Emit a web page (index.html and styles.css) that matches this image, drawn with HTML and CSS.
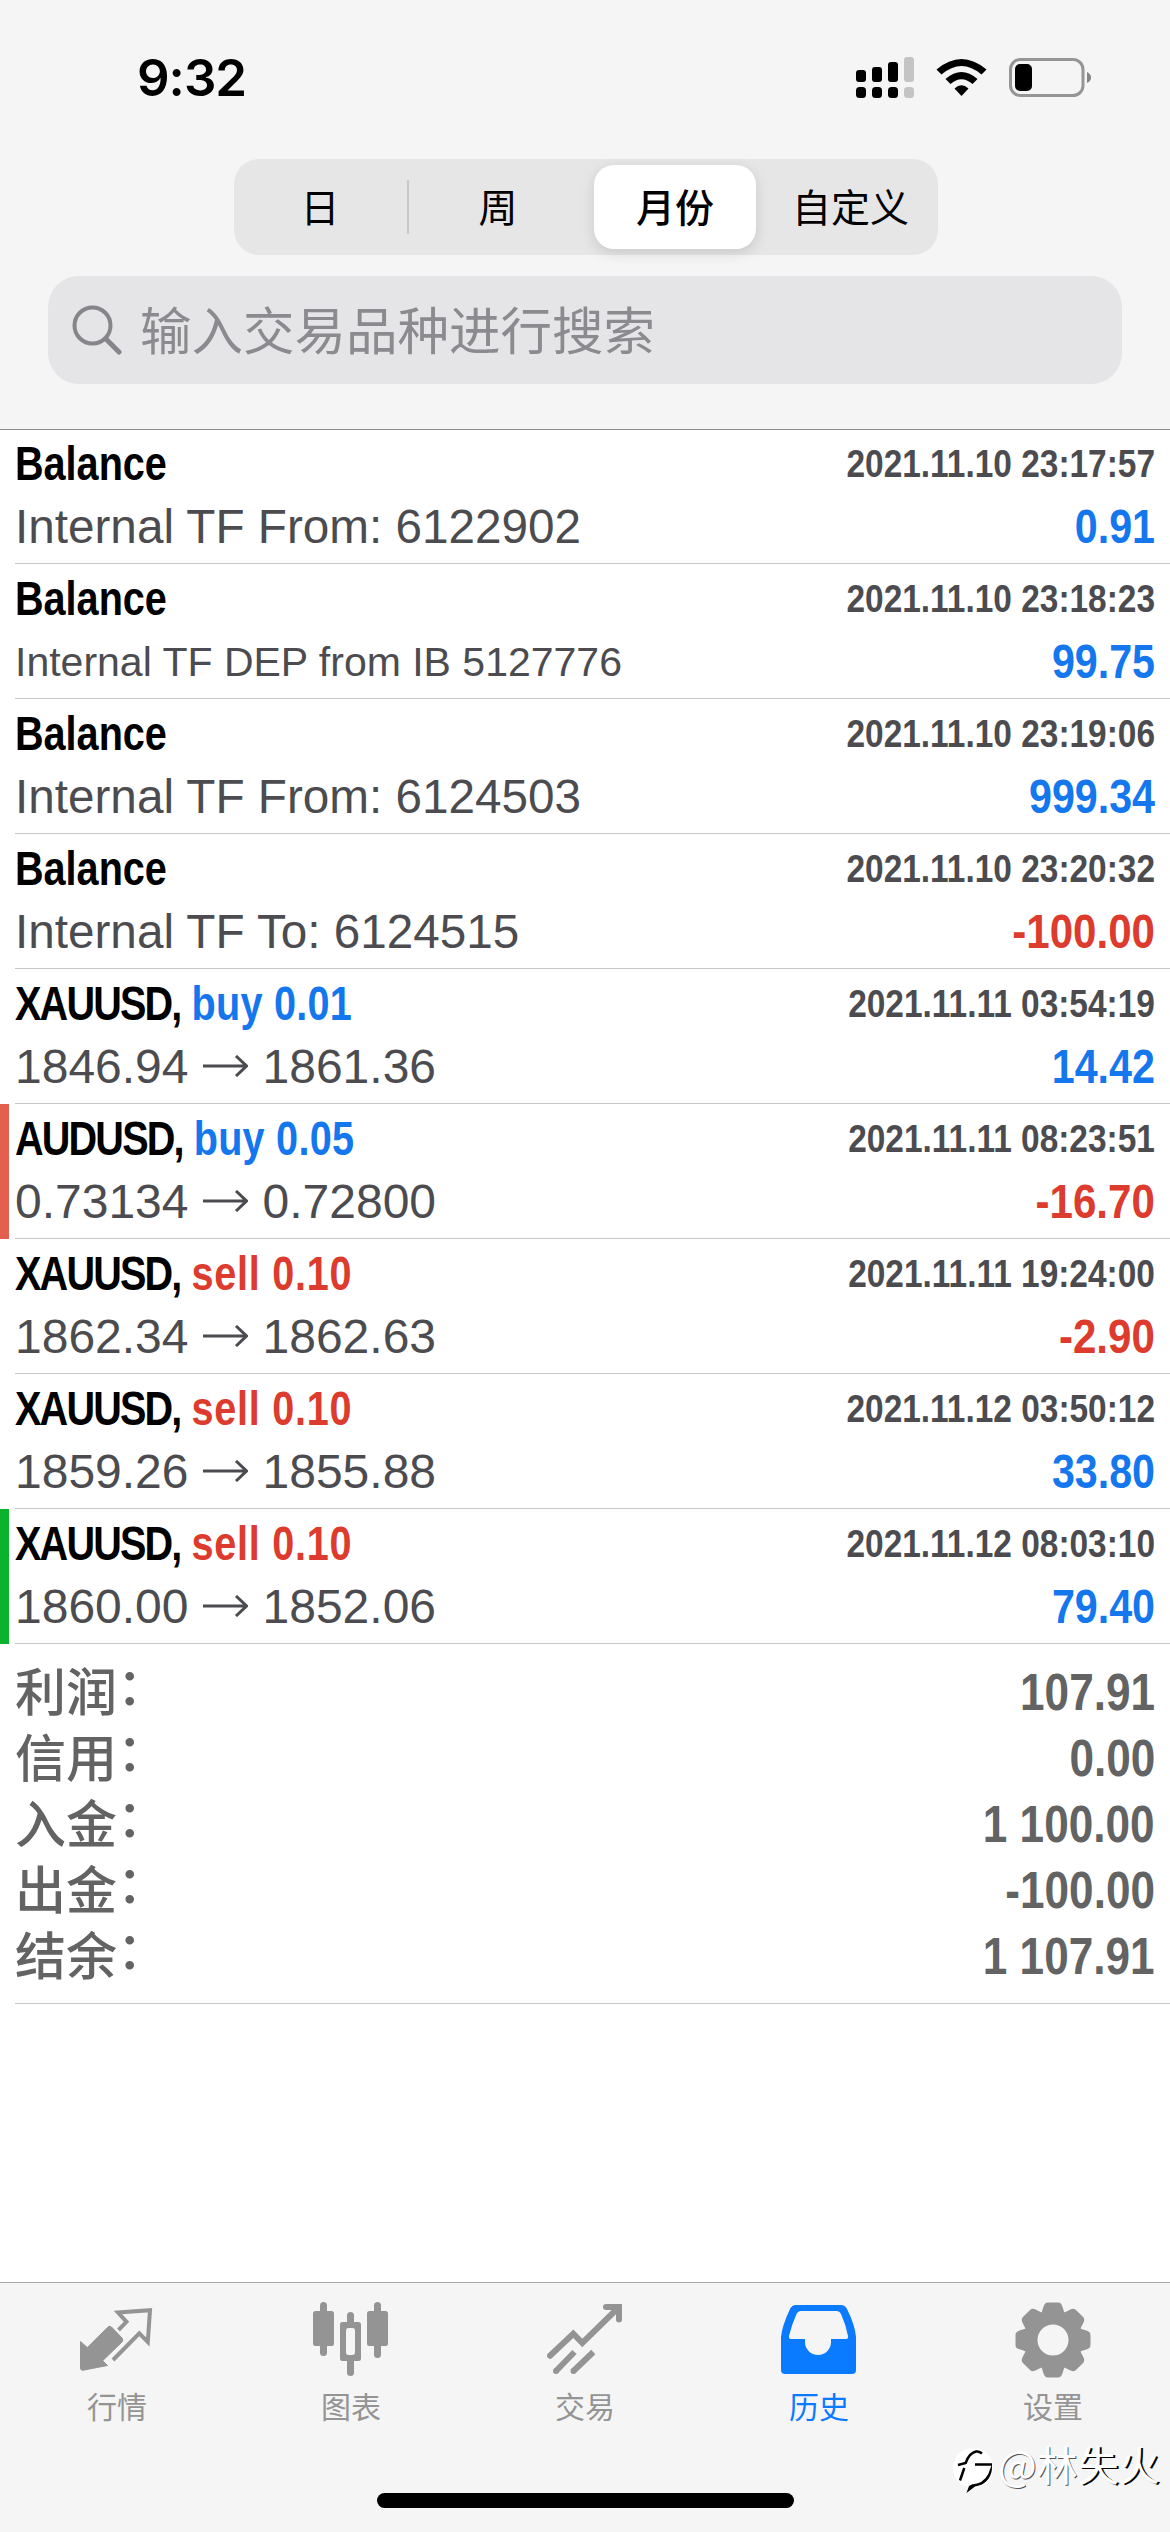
FILE: index.html
```html
<!DOCTYPE html>
<html lang="zh-CN">
<head>
<meta charset="utf-8">
<title>历史</title>
<link rel="stylesheet" href="styles.css">
</head>
<body>
<div class="screen">
  <header class="top">
    <div class="status">
      <span class="time">9:32</span>
      <svg class="status-icons" width="236" height="44" viewBox="0 0 236 44">
        <g fill="#000"><rect y="14" width="10" height="12" rx="3"/><rect x="16" y="11" width="10" height="15" rx="3"/><rect x="32" y="6" width="10" height="20" rx="3"/>
        <rect y="31" width="10" height="11" rx="3.5"/><rect x="16" y="31" width="10" height="11" rx="3.5"/><rect x="32" y="31" width="10" height="11" rx="3.5"/></g>
        <g fill="#c4c4c4"><rect x="48" y="1" width="10" height="25" rx="3"/><rect x="48" y="31" width="10" height="11" rx="3.5"/></g>
        <path d="M80.500 13.500 Q105.500 -7.500 130.500 13.500 L125.500 18.500 Q105.500 1.500 85.500 18.500Z"/>
        <path d="M89.500 23 Q105.500 9 121.500 23 L116.500 28 Q105.500 18.500 94.500 28Z"/>
        <path d="M98.500 32.500 Q105.500 26 112.500 32.500 L105.500 40Z"/>
        <rect x="154.500" y="3.500" width="72.500" height="36" rx="10" fill="none" stroke="#959595" stroke-width="3"/>
        <rect x="159" y="8" width="17" height="27" rx="5"/>
        <path d="M231 16 Q235 18 235 21.500 Q235 25 231 27Z" fill="#858585"/>
      </svg>
    </div>
    <nav class="segments">
      <span class="seg seg-day">日</span>
      <span class="seg seg-week">周</span>
      <span class="seg seg-month">月份</span>
      <span class="seg seg-custom">自定义</span>
    </nav>
    <div class="search">
      <svg width="50" height="50" viewBox="0 0 50 50" fill="none" stroke="#85858a" stroke-width="4" stroke-linecap="round"><circle cx="20.500" cy="20.500" r="18"/><path d="M34 34 L47 47" stroke-width="5"/></svg>
      <span>输入交易品种进行搜索</span>
    </div>
  </header>

  <main class="list">
    <article class="deal">
      <h2 class="name">Balance</h2><time class="date">2021.11.10 23:17:57</time>
      <p class="detail note">Internal TF From: 6122902</p><b class="amount">0.91</b>
    </article>
    <article class="deal">
      <h2 class="name">Balance</h2><time class="date">2021.11.10 23:18:23</time>
      <p class="detail small">Internal TF DEP from IB 5127776</p><b class="amount">99.75</b>
    </article>
    <article class="deal">
      <h2 class="name">Balance</h2><time class="date">2021.11.10 23:19:06</time>
      <p class="detail note">Internal TF From: 6124503</p><b class="amount">999.34</b>
    </article>
    <article class="deal">
      <h2 class="name">Balance</h2><time class="date">2021.11.10 23:20:32</time>
      <p class="detail note">Internal TF To: 6124515</p><b class="amount loss">-100.00</b>
    </article>
    <article class="deal">
      <h2 class="name"><span class="symbol">XAUUSD,</span> <span class="buy">buy 0.01</span></h2><time class="date">2021.11.11 03:54:19</time>
      <p class="detail">1846.94<svg class="arrow" viewBox="0 0 45 22"><path d="M0 11H43M33 1L43.500 11L33 21"/></svg>1861.36</p><b class="amount">14.42</b>
    </article>
    <article class="deal mark-stop">
      <h2 class="name"><span class="symbol">AUDUSD,</span> <span class="buy">buy 0.05</span></h2><time class="date">2021.11.11 08:23:51</time>
      <p class="detail">0.73134<svg class="arrow" viewBox="0 0 45 22"><path d="M0 11H43M33 1L43.500 11L33 21"/></svg>0.72800</p><b class="amount loss">-16.70</b>
    </article>
    <article class="deal">
      <h2 class="name"><span class="symbol">XAUUSD,</span> <span class="sell">sell 0.10</span></h2><time class="date">2021.11.11 19:24:00</time>
      <p class="detail">1862.34<svg class="arrow" viewBox="0 0 45 22"><path d="M0 11H43M33 1L43.500 11L33 21"/></svg>1862.63</p><b class="amount loss">-2.90</b>
    </article>
    <article class="deal">
      <h2 class="name"><span class="symbol">XAUUSD,</span> <span class="sell">sell 0.10</span></h2><time class="date">2021.11.12 03:50:12</time>
      <p class="detail">1859.26<svg class="arrow" viewBox="0 0 45 22"><path d="M0 11H43M33 1L43.500 11L33 21"/></svg>1855.88</p><b class="amount">33.80</b>
    </article>
    <article class="deal mark-take">
      <h2 class="name"><span class="symbol">XAUUSD,</span> <span class="sell">sell 0.10</span></h2><time class="date">2021.11.12 08:03:10</time>
      <p class="detail">1860.00<svg class="arrow" viewBox="0 0 45 22"><path d="M0 11H43M33 1L43.500 11L33 21"/></svg>1852.06</p><b class="amount">79.40</b>
    </article>
    <dl class="totals">
      <div class="total"><dt>利润<span class="colon">：</span></dt><dd>107.91</dd></div>
      <div class="total"><dt>信用<span class="colon">：</span></dt><dd>0.00</dd></div>
      <div class="total"><dt>入金<span class="colon">：</span></dt><dd>1 100.00</dd></div>
      <div class="total"><dt>出金<span class="colon">：</span></dt><dd>-100.00</dd></div>
      <div class="total"><dt>结余<span class="colon">：</span></dt><dd>1 107.91</dd></div>
    </dl>
  </main>

  <footer class="bottom">
    <nav class="tabs">
      <a class="tab">
        <svg viewBox="0 0 76 76"><path fill="currentColor" stroke="currentColor" stroke-width="1" stroke-linejoin="round" d="M1.500 39.500L8.300 45.500L28 26Q30 23 32.500 25L43 36Q44.500 38 43 40L23.700 58.700L28.500 63.500L4 68.200Q1.500 68.500 1.500 66Z"/><path fill="none" stroke="currentColor" stroke-width="4" d="M39.500 28L47.500 19.800L39 10.500L71 8.200L68.800 40L60.300 31.300L34 58"/></svg>
        <span>行情</span>
      </a>
      <a class="tab">
        <svg viewBox="0 0 76 76" fill="currentColor"><rect y="9" width="21" height="35" rx="2.500"/><rect x="7" width="7" height="54" rx="3.500"/><rect x="34" y="10" width="7" height="14" rx="3.500"/><rect x="34" y="55" width="7" height="19" rx="3.500"/><path fill-rule="evenodd" d="M29.500 20H45.500Q48 20 48 22.500V56.500Q48 59 45.500 59H29.500Q27 59 27 56.500V22.500Q27 20 29.500 20ZM35.500 26Q33 26 33 29V50Q33 53 35.500 53H39.500Q42 53 42 50V29Q42 26 39.500 26Z"/><rect x="54" y="9" width="21" height="35" rx="2.500"/><rect x="61" width="7" height="56" rx="3.500"/></svg>
        <span>图表</span>
      </a>
      <a class="tab">
        <svg viewBox="0 0 76 76" fill="none" stroke="currentColor" stroke-width="6"><path stroke-linecap="round" d="M3 53.700L26.300 31.700L35.300 41L71 6M59 5H72V17.500"/><path d="M27.500 50L9 69M46.300 50L26.500 69"/><g fill="currentColor" stroke="none"><circle cx="9" cy="69" r="3"/><circle cx="26.500" cy="69" r="3"/></g></svg>
        <span>交易</span>
      </a>
      <a class="tab active">
        <svg viewBox="0 0 76 76" fill="currentColor"><path fill-rule="evenodd" d="M0 35Q1 24 9 7Q11 3 15 3H60Q64 3 66 7Q74 23 75 35V68Q75 72 71 72H4Q0 72 0 68ZM20 9Q17 9 15.500 12Q11 22 8 34Q7.500 37 10 37H24V40A13 13 0 0 0 50 40V37H65Q67.500 37 67 34Q65 23 60 12Q58.500 9 55.500 9Z"/></svg>
        <span>历史</span>
      </a>
      <a class="tab">
        <svg viewBox="-38 -38 76 76" fill="currentColor"><circle r="22.500" fill="none" stroke="currentColor" stroke-width="14"/><path id="tooth" d="M-13 -25C-9 -30 -10.500 -37.500 -5 -37.500H5C10.500 -37.500 9 -30 13 -25Z"/><use href="#tooth" transform="rotate(45)"/><use href="#tooth" transform="rotate(90)"/><use href="#tooth" transform="rotate(135)"/><use href="#tooth" transform="rotate(180)"/><use href="#tooth" transform="rotate(225)"/><use href="#tooth" transform="rotate(270)"/><use href="#tooth" transform="rotate(315)"/></svg>
        <span>设置</span>
      </a>
    </nav>
    <div class="home"></div>
  </footer>

  <div class="watermark">
    <svg width="44" height="50" viewBox="0 0 44 50"><circle cx="22" cy="20" r="20" fill="#fff"/><path fill="none" stroke="#000" stroke-width="2.500" d="M7 17L14.700 15Q18 5 25 3.500Q28 3 31 5.500M13.300 20L9 32.500M24 16.500H41"/><path d="M41 16Q42 30 31 36.500Q27 38 24 38.500L15.500 45L18 38Q21 35.500 26 35.500Q36 33 39.500 20Z"/></svg>
    <span>@林<span class="heavy">失火</span></span>
  </div>
</div>
</body>
</html>
```

FILE: styles.css
```css
* { box-sizing: border-box; }
body, h2, p, dl, dd { margin: 0; }
body { background: #fff; }

.screen {
  position: relative;
  display: flex;
  flex-direction: column;
  width: 1170px;
  height: 2532px;
  overflow: hidden;
  font-family: "Liberation Sans", "Noto Sans CJK SC", sans-serif;
}

/* header */
.top {
  flex: none;
  height: 430px;
  background: #f5f5f5;
  border-bottom: 1px solid #8c8c8c;
  font-family: "Noto Sans CJK SC", sans-serif;
}
.status {
  display: flex;
  justify-content: space-between;
  align-items: flex-start;
  height: 159px;
  padding: 56px 78px 0 137px;
}
.time {
  font: 600 51px/44px Inter, sans-serif;
  letter-spacing: -1px;
}
.segments {
  display: grid;
  grid-template-columns: 175px 178px 176px 175px;
  width: 704px;
  height: 96px;
  margin-left: 234px;
  background: #e6e6e7;
  border-radius: 25px;
  font-size: 39px;
  line-height: 92px;
  text-align: center;
}
.seg-day {
  padding-right: 3px;
  background: linear-gradient(#c9c9cb, #c9c9cb) right 21px / 2px 54px no-repeat;
}
.seg-month {
  margin: 6px 7px;
  background: #fff;
  border-radius: 20px;
  box-shadow: 0 4px 14px rgba(0, 0, 0, .13);
  line-height: 80px;
  font-weight: 500;
}
.search {
  display: flex;
  align-items: center;
  gap: 18px;
  height: 108px;
  margin: 21px 48px 0;
  padding: 0 24px;
  background: #e5e5e7;
  border-radius: 31px;
  color: #8b8b8f;
  font-size: 51.500px;
  line-height: 102px;
}
.search span { padding-bottom: 4px; }

/* deals */
.list { flex: 1; }
.deal {
  display: grid;
  grid-template-columns: 1fr auto;
  grid-template-rows: 60px 60px;
  row-gap: 3px;
  align-content: end;
  height: 135px;
  padding: 0 15px 7px;
  background: linear-gradient(#c6c6c8, #c6c6c8) 15px 100% / 100% 1px no-repeat;
  line-height: 60px;
  white-space: nowrap;
}
.deal:first-child { height: 134px; }
.mark-stop { box-shadow: inset 9px 0 #e35f4e; }
.mark-take { box-shadow: inset 9px 0 #0bb32c; }
.name {
  font-size: 48px;
  transform: scaleX(.825);
  transform-origin: left;
}
.symbol { letter-spacing: -2.200px; }
.buy { color: #1577ee; letter-spacing: .3px; }
.sell { color: #dc3b2d; letter-spacing: .9px; }
.date {
  font-size: 39px;
  font-weight: 700;
  color: #4c4c50;
  transform: scaleX(.857);
  transform-origin: right;
}
.detail {
  font-size: 48px;
  color: #4c4c50;
}
.note { transform: scaleX(.993); transform-origin: left; }
.small { font-size: 41px; }
.arrow {
  width: 45px;
  height: 22px;
  margin: 0 15px 0 14px;
  vertical-align: 6px;
  fill: none;
  stroke: #4c4c50;
  stroke-width: 3;
}
.amount {
  font-size: 48px;
  color: #1577ee;
  text-align: right;
  transform: scaleX(.858);
  transform-origin: right;
}
.loss { color: #dc3b2d; transform: scaleX(.877); }

/* totals */
.totals {
  height: 360px;
  padding: 12px 15px 0;
  background: linear-gradient(#c6c6c8, #c6c6c8) 15px 100% / 100% 1px no-repeat;
  color: #636363;
}
.total {
  display: flex;
  justify-content: space-between;
  height: 66px;
  font-size: 51px;
  line-height: 66px;
}
.total dt {
  font-family: "Noto Sans CJK SC", sans-serif;
  font-weight: 500;
}
.colon {
  line-height: 0;
  vertical-align: 6px;
}
.total dd {
  padding-top: 4px;
  font-weight: 700;
  transform: scaleX(.865);
  transform-origin: right;
}

/* tab bar */
.bottom {
  height: 250px;
  background: #f5f5f5;
  border-top: 1px solid #a9a9ab;
}
.tabs {
  display: grid;
  grid-template-columns: repeat(5, 1fr);
  height: 210px;
  padding-top: 19px;
}
.tab {
  display: flex;
  flex-direction: column;
  align-items: center;
  color: #949494;
  font: 30px/44px "Noto Sans CJK SC", sans-serif;
}
.tab svg { width: 76px; height: 76px; margin-bottom: 5px; }
.active { color: #0a7aff; }
.home {
  width: 417px;
  height: 15px;
  margin: 0 auto;
  background: #000;
  border-radius: 8px;
}

/* signature over the tab bar */
.watermark {
  position: absolute;
  left: 951px;
  top: 2438px;
  display: flex;
  align-items: flex-start;
  gap: 3px;
  color: #fff;
  font: 41px/50px "Noto Sans CJK SC", sans-serif;
  text-shadow: 1px 1px 0 #555;
  white-space: nowrap;
}
.watermark svg { margin-top: 10px; }
.heavy { text-shadow: 2px 1px 0 #000; }
```
